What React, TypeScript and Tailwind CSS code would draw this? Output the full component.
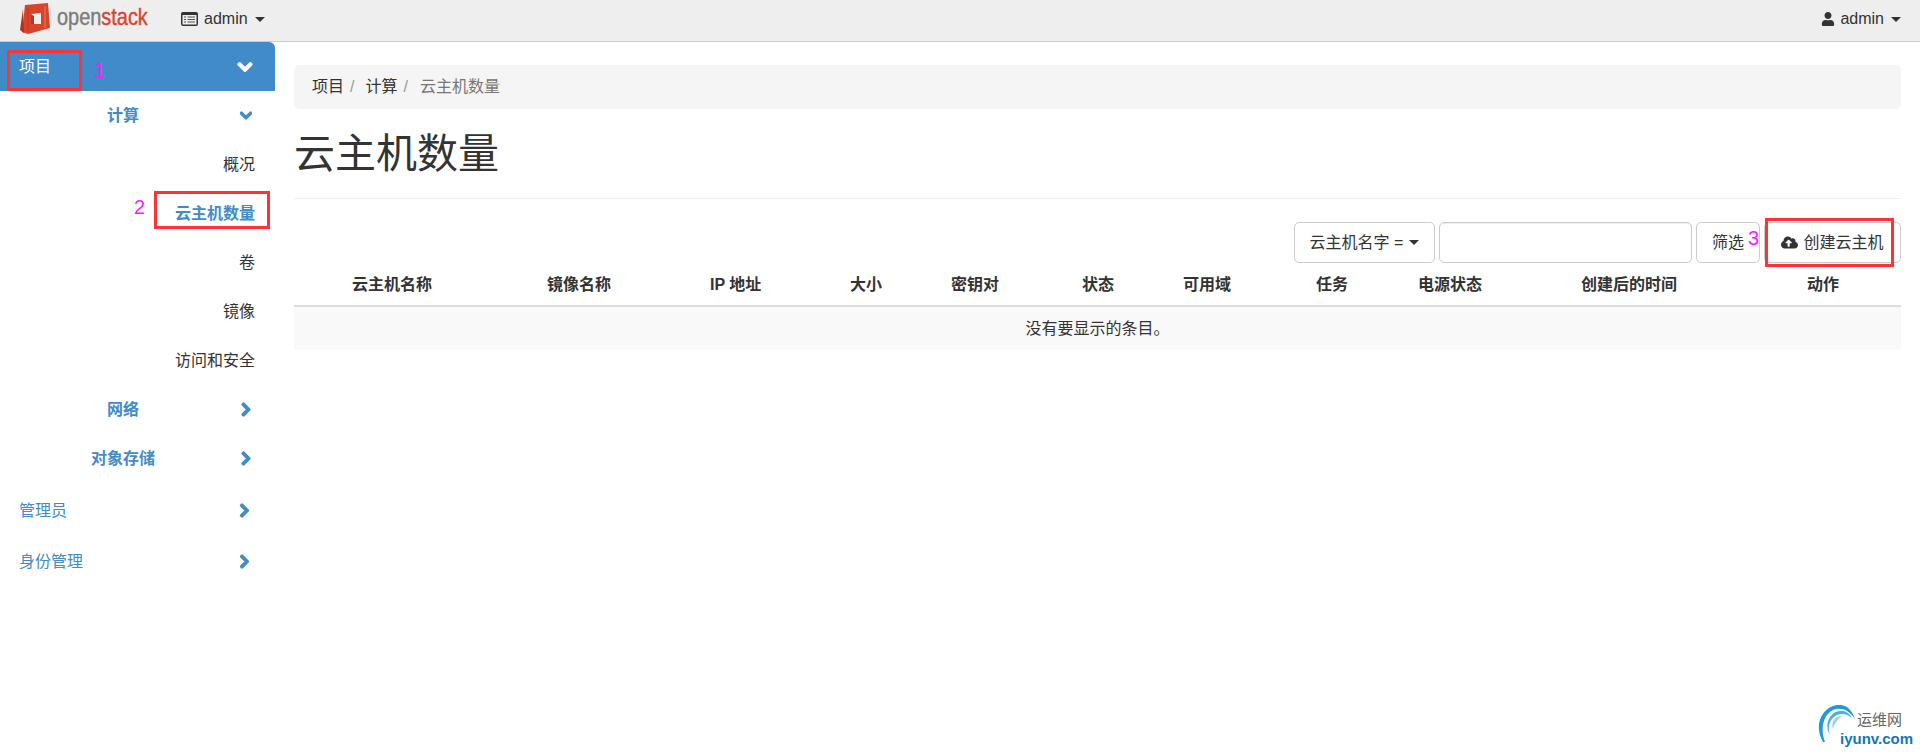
import { FaChevronDown, FaChevronRight, FaCloudUploadAlt, FaUser } from "react-icons/fa";

const font = "font-['Liberation_Sans','Noto_Sans_CJK_SC',sans-serif]";

const columns = [
  { label: "云主机名称", width: "w-[195px]" },
  { label: "镜像名称", width: "w-[163px]" },
  { label: "IP 地址", width: "w-[140px]" },
  { label: "大小", width: "w-[101px]" },
  { label: "密钥对", width: "w-[131px]" },
  { label: "状态", width: "w-[101px]" },
  { label: "可用域", width: "w-[133px]" },
  { label: "任务", width: "w-[102px]" },
  { label: "电源状态", width: "w-[163px]" },
  { label: "创建后的时间", width: "w-[226px]" },
  { label: "动作", width: "w-[60px]" },
];

function Caret() {
  return <span className="inline-block h-0 w-0 border-x-[5px] border-t-[5px] border-x-transparent border-t-[#333]" />;
}

function ListIcon() {
  return (
    <svg width="17" height="14" viewBox="0 0 17 14">
      <rect x="0" y="0" width="17" height="14" rx="2" fill="#333" />
      <rect x="1.5" y="3" width="14" height="9.5" fill="#eee" />
      <path d="M3 5h2M3 7.5h2M3 10h2M6.5 5h7.5M6.5 7.5h7.5M6.5 10h7.5" stroke="#555" strokeWidth="1.2" />
    </svg>
  );
}

function Logo() {
  return (
    <div className="ml-[20px] flex items-center">
      <svg width="31" height="32" viewBox="0 0 31 32">
        <path d="M5 2 L28 0 L30 25 L8 31 L2 29 Z" fill="#d8432b" />
        <path d="M3 6 L0 27 L4 30 Z" fill="#a93420" />
        <path d="M11 11 L21 10 L21 21 L11 21 Z" fill="#eeeeee" />
        <path d="M11 11 L14 13 L14 21 L11 21 Z" fill="#b03a24" />
        <path d="M8 5 L8 28" stroke="#b93a25" strokeWidth="1" />
        <path d="M25 3 L25 25" stroke="#ec7a60" strokeWidth="1" />
      </svg>
      <span className="ml-[6px] mt-[-4px] inline-block w-[92px] origin-left scale-x-[0.83] whitespace-nowrap text-[24px] leading-none [-webkit-text-stroke:0.4px]">
        <span className="text-[#7b7b7b]">open</span>
        <span className="text-[#d8432b]">stack</span>
      </span>
    </div>
  );
}

function Navbar() {
  return (
    <header className="flex h-[42px] items-center justify-between border-b border-[#ccc] bg-[#eee] pb-[3px] text-[#333]">
      <div className="flex items-center">
        <Logo />
        <div className="ml-[32px] flex items-center text-[16px]">
          <ListIcon />
          <span className="ml-[6px]">admin</span>
          <span className="ml-[7px] flex"><Caret /></span>
        </div>
      </div>
      <div className="mr-[19px] flex items-center text-[16px]">
        <FaUser className="h-[14px] w-[14px]" />
        <span className="ml-[5px]">admin</span>
        <span className="ml-[7px] flex"><Caret /></span>
      </div>
    </header>
  );
}

function SubGroup({ label, open, pad }: { label: string; open?: boolean; pad: string }) {
  return (
    <div className="flex h-[49px] items-center text-[16px] font-bold text-[#428bca]">
      <span className={pad}>{label}</span>
      <span className="ml-auto mr-[23px] flex w-[12px] justify-center">
        {open ? <FaChevronDown className="h-[15px] w-[15px] [stroke-width:50]" /> : <FaChevronRight className="h-[15px] w-[15px] [stroke-width:50]" />}
      </span>
    </div>
  );
}

function SubItem({ label, active }: { label: string; active?: boolean }) {
  return (
    <div className={`flex h-[49px] items-center justify-end pr-[20px] text-[16px] ${active ? "font-bold text-[#428bca]" : "text-[#333]"}`}>
      {label}
    </div>
  );
}

function Sidebar() {
  return (
    <aside className="w-[275px] shrink-0">
      <div className="flex h-[49px] items-center rounded-tr-[6px] bg-[#428bca] pl-[19px] pr-[22px] text-[16px] text-white">
        项目
        <FaChevronDown className="ml-auto h-[16px] w-[16px] [stroke-width:50]" />
      </div>
      <SubGroup label="计算" open pad="ml-[107px]" />
      <SubItem label="概况" />
      <SubItem label="云主机数量" active />
      <SubItem label="卷" />
      <SubItem label="镜像" />
      <SubItem label="访问和安全" />
      <SubGroup label="网络" pad="ml-[107px]" />
      <SubGroup label="对象存储" pad="ml-[91px]" />
      <div className="mt-[2px] flex h-[51px] items-center pl-[19px] pr-[23px] text-[16px] text-[#428bca]">
        管理员
        <FaChevronRight className="ml-auto h-[15px] w-[15px] [stroke-width:50]" />
      </div>
      <div className="flex h-[51px] items-center pl-[19px] pr-[23px] text-[16px] text-[#428bca]">
        身份管理
        <FaChevronRight className="ml-auto h-[15px] w-[15px] [stroke-width:50]" />
      </div>
    </aside>
  );
}

function Toolbar() {
  return (
    <div className="mt-[23px] flex justify-end text-[16px] text-[#333]">
      <button className="flex h-[41px] w-[141px] items-center justify-center gap-[6px] rounded-[5px] border border-[#ccc] bg-white">
        云主机名字 = <Caret />
      </button>
      <input className="ml-[4px] h-[41px] w-[253px] rounded-[5px] border border-[#ccc] bg-white shadow-[inset_0_1px_1px_rgba(0,0,0,0.075)]" />
      <button className="ml-[4px] h-[41px] w-[64px] rounded-[5px] border border-[#ccc] bg-white">筛选</button>
      <button className="ml-[4px] flex h-[41px] w-[137px] items-center justify-center gap-[5px] rounded-[5px] border border-[#ccc] bg-white">
        <FaCloudUploadAlt className="h-[17px] w-[17px]" />
        创建云主机
      </button>
    </div>
  );
}

function Content() {
  return (
    <main className="ml-[19px] w-[1607px]">
      <nav className="mt-[23px] flex h-[44px] items-center rounded-[5px] bg-[#f5f5f5] pl-[18px] text-[16px] text-[#333]">
        项目<span className="ml-[6px] text-[#999]">/</span>
        <span className="ml-[11px]">计算</span><span className="ml-[6px] text-[#999]">/</span>
        <span className="ml-[12px] text-[#777]">云主机数量</span>
      </nav>
      <h1 className="mt-[20px] text-[41px] font-normal leading-[50px] text-[#333]">云主机数量</h1>
      <div className="mt-[19px] border-t border-[#eee]" />
      <Toolbar />
      <div className="mt-[1px] flex h-[43px] items-center border-b-2 border-[#ddd] pl-[58px] text-[16px] font-bold text-[#333]">
        {columns.map((c) => (
          <div key={c.label} className={c.width}>{c.label}</div>
        ))}
      </div>
      <div className="flex h-[43px] items-center justify-center bg-[#f9f9f9] text-[16px] text-[#333]">没有要显示的条目。</div>
    </main>
  );
}

// red boxes and numbers drawn over the page by whoever took the screenshot
function Annotations() {
  return (
    <>
      <div className="absolute left-[7px] top-[50px] h-[41px] w-[75px] border-[3px] border-[#ff3333]" />
      <div className="absolute left-[154px] top-[191px] h-[38px] w-[116px] border-[3px] border-[#ff3333]" />
      <div className="absolute left-[1765px] top-[218px] h-[49px] w-[129px] border-[3px] border-[#ff3333]" />
      <span className="absolute left-[94px] top-[58px] text-[20px] leading-[24px] text-[#ff19ff]">1</span>
      <span className="absolute left-[134px] top-[195px] text-[20px] leading-[24px] text-[#ff19ff]">2</span>
      <span className="absolute left-[1748px] top-[226px] text-[20px] leading-[24px] text-[#ff19ff]">3</span>
    </>
  );
}

function Watermark() {
  return (
    <div className="absolute left-[1817px] top-[705px] h-[48px] w-[103px]">
      <svg width="40" height="38" viewBox="0 0 40 38" className="absolute left-0 top-0">
        <path d="M6 37 C-3 22 3 3 20 0 C28 -1 35 4 38 14 C33 6 26 3 19 4 C8 6 2 22 8 37 Z" fill="#1d9bd8" />
        <path d="M13 30 C7 20 12 8 22 6 C28 5 33 9 35 13 C30 9 25 8 20 10 C13 13 10 22 13 30 Z" fill="#48b2e4" />
        <path d="M16 24 C14 17 18 11 25 11 C22 13 18 17 16 24 Z" fill="#8fd2f0" />
      </svg>
      <span className="absolute left-[40px] top-[5px] whitespace-nowrap text-[15px] leading-[20px] text-[#666]">运维网</span>
      <span className="absolute left-[23px] top-[24px] whitespace-nowrap text-[15px] font-bold leading-[20px] text-[#1277b8]">iyunv.com</span>
    </div>
  );
}

export default function App() {
  return (
    <div className={`relative h-[753px] w-[1920px] overflow-hidden bg-white ${font}`}>
      <Navbar />
      <div className="flex">
        <Sidebar />
        <Content />
      </div>
      <Annotations />
      <Watermark />
    </div>
  );
}
